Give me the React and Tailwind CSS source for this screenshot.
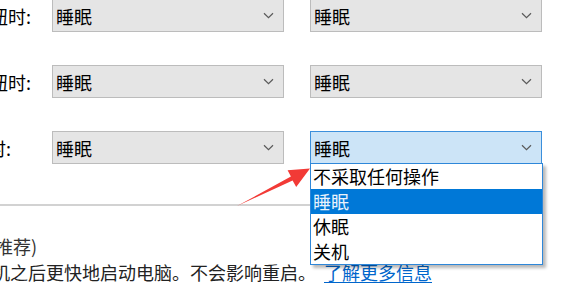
import React from 'react';

const Chevron = () => (
  <svg width="11" height="7" viewBox="0 0 11 7" className="shrink-0">
    <path d="M1 1.2 L5.5 5.6 L10 1.2" fill="none" stroke="#5a5a5a" strokeWidth="1.2" />
  </svg>
);

const Select = ({ value = '睡眠', open = false }) => (
  <div
    className={
      'w-[232px] h-[33px] shrink-0 flex items-center justify-between pl-[3px] pr-[9px] border ' +
      (open ? 'bg-[#cce4f7] border-[#3b8fdc]' : 'bg-[#e5e5e5] border-[#bcbcbc]')
    }
  >
    <span className="text-[18px] leading-none text-black">{value}</span>
    <Chevron />
  </div>
);

const rows = [
  { label: '按电源按钮时:', ml: 'ml-[-82px] w-[134px]' },
  { label: '按睡眠按钮时:', ml: 'ml-[-82px] w-[134px]' },
  { label: '关闭盖子时:', ml: 'ml-[-84px] w-[136px]' },
];

const options = ['不采取任何操作', '睡眠', '休眠', '关机'];

const App = () => {
  return (
    <div
      className="relative w-[588px] h-[293px] overflow-hidden bg-white text-black"
      style={{ fontFamily: '"Noto Sans CJK SC", "Noto Sans", sans-serif' }}
    >
      <div className="flex flex-col gap-[33px] mt-[-1px]">
        {rows.map((row, i) => (
          <div key={i} className="flex items-center">
            <span className={'shrink-0 whitespace-nowrap text-[18px] leading-none ' + row.ml}>{row.label}</span>
            <Select />
            <div className="w-[26px] shrink-0" />
            <Select open={i === 2} />
          </div>
        ))}
      </div>

      <div className="mt-[40px] h-[2px] w-[520px] bg-[#d2d2d2]" />

      <div className="mt-[27px] ml-[-119px] whitespace-nowrap text-[18px] leading-[26px] text-[#333333]">
        启用快速启动(推荐)
      </div>
      <div className="ml-[-116px] whitespace-nowrap text-[18px] leading-[26px] text-[#222222]">
        这有助于在关机之后更快地启动电脑。不会影响重启。
        <span className="ml-[8px] text-[#0066cc] underline underline-offset-2">了解更多信息</span>
      </div>

      {/* open dropdown list */}
      <div className="absolute left-[310px] top-[163px] w-[233px] bg-white border border-[#2e87d9] shadow-[3px_3px_3px_rgba(0,0,0,0.28)]">
        {options.map((o, i) => (
          <div
            key={o}
            className={
              'h-[25px] pl-[2px] text-[18px] leading-[25px] whitespace-nowrap ' +
              (i === 1 ? 'bg-[#0078d7] text-[#e8f2fc]' : 'text-black')
            }
          >
            {o}
          </div>
        ))}
      </div>

      {/* red annotation arrow */}
      <svg className="absolute left-0 top-0 pointer-events-none" width="588" height="293">
        <polygon
          points="237,206 292.6,180.4 296.2,187 310,168.5 287.6,170.2 290.9,176.6"
          fill="#f23a36"
        />
      </svg>
    </div>
  );
};

export default App;
